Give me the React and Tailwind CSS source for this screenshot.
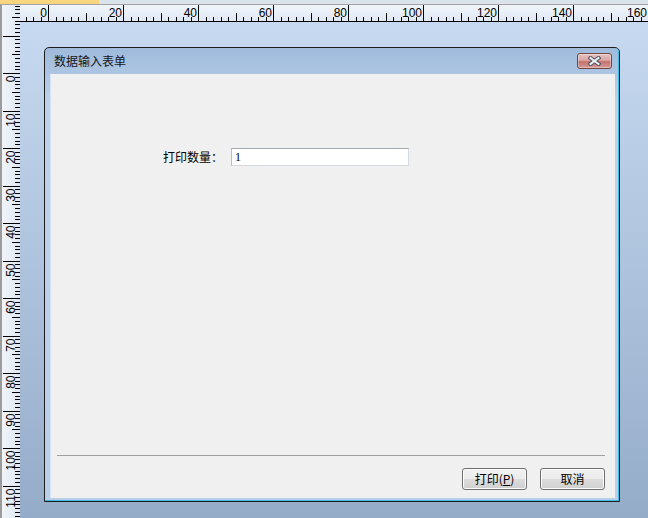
import React from 'react';

const cjk = "font-['Noto_Sans_CJK_SC','Noto_Sans_CJK_JP',sans-serif]";

// top ruler: 0 sits at page x 48.5, one small tick every 2 units (7.5px)
function TopRuler() {
  const ticks = [];
  for (let k = -3; k <= 80; k++) {
    const x = Math.floor(28.5 + 7.5 * k) + 0.5;
    const major = k % 10 === 0;
    const mid = !major && k % 5 === 0;
    const y1 = major ? 0 : mid ? 8 : 12;
    ticks.push(<line key={k} x1={x} x2={x} y1={y1} y2={16} stroke="#000" strokeWidth="1" />);
    if (major && k >= 0) {
      ticks.push(
        <text key={'t' + k} x={x - 1.5} y={12} textAnchor="end" fontSize="12"
          fontFamily="'Liberation Sans Narrow','Liberation Sans',sans-serif" fill="#000">
          {2 * k}
        </text>
      );
    }
  }
  return (
    <svg width="628" height="16" className="block">
      {ticks}
    </svg>
  );
}

// side ruler: 0 sits at page y 73.5, one tick every unit (3.75px)
function SideRuler() {
  const ticks = [];
  for (let j = -18; j <= 118; j++) {
    const y = Math.floor(68.5 + 3.75 * j) + 0.5;
    const major = j % 10 === 0;
    const mid = !major && j % 5 === 0;
    const x1 = major ? 1 : mid ? 10 : 13;
    ticks.push(<line key={j} x1={x1} x2={18} y1={y} y2={y} stroke="#000" strokeWidth="1" />);
    if (major && j >= 0) {
      ticks.push(
        <text key={'t' + j} x={13} y={y + 2} textAnchor="end" fontSize="12"
          transform={`rotate(-90 13 ${y + 2})`}
          fontFamily="'Liberation Sans Narrow','Liberation Sans',sans-serif" fill="#000">
          {j}
        </text>
      );
    }
  }
  return (
    <svg width="18" height="513" className="block">
      {ticks}
    </svg>
  );
}

function CloseButton() {
  return (
    <div className="w-[35px] h-[16px] mt-[5px] mr-[6px] rounded-[3px] border border-[#6e4646] bg-[linear-gradient(#e6c2c0_0%,#d9a5a2_45%,#c4726d_55%,#d49a96_100%)] shadow-[inset_0_0_0_1px_rgba(255,255,255,0.35)] flex items-center justify-center">
      <svg width="13" height="10" viewBox="0 0 13 10">
        <path d="M2.5 2 L10.5 8 M10.5 2 L2.5 8" stroke="#4b4f5e" strokeWidth="4" strokeLinecap="square" />
        <path d="M2.5 2 L10.5 8 M10.5 2 L2.5 8" stroke="#eef2f6" strokeWidth="2" strokeLinecap="square" />
      </svg>
    </div>
  );
}

function Button({ children }) {
  return (
    <button className={`w-[65px] h-[22px] rounded-[3px] border border-[#707070] bg-[linear-gradient(#f2f2f2_0%,#ebebeb_50%,#dddddd_50%,#cfcfcf_100%)] shadow-[inset_0_0_0_1px_#fbfbfb] text-[12px] leading-none text-black ${cjk}`}>
      {children}
    </button>
  );
}

export default function App() {
  return (
    <div className="w-[648px] h-[518px] overflow-hidden flex flex-col bg-[#e4ecf6]">
      {/* top strip */}
      <div className="h-[4px] flex">
        <div className="w-[99px] bg-[#f8d57e]" />
        <div className="flex-1 bg-[#dbe3ec]" />
      </div>
      <div className="h-px bg-[#a3a3a3]" />

      <div className="flex-1 flex">
        <div className="w-[20px] border-l-2 border-[#9b9b9b] bg-[linear-gradient(90deg,#f1f5fa,#dfe8f3)]">
          <SideRuler />
        </div>

        <div className="flex-1 flex flex-col">
          <div className="h-[16px] bg-[linear-gradient(#f1f5fb,#dfe8f4)]">
            <TopRuler />
          </div>
          <div className="h-px bg-black" />

          {/* design canvas */}
          <div className="flex-1 pl-[24px] pt-[25px] bg-[linear-gradient(#c6d9f0,#95acc9)]">
            <div className="w-[576px] h-[455px] rounded-t-[5px] border border-[#1c1c1c] bg-[linear-gradient(#9fbadb,#bcd2eb_12%,#b9cfe9)]">
              <div className="h-full flex flex-col border-r border-b border-[#3bbde6] rounded-t-[4px]">
                {/* title bar */}
                <div className="h-[26px] flex items-start">
                  <div className={`flex-1 pl-[9px] pt-[6px] text-[12px] leading-[14px] text-[#151515] ${cjk}`}>
                    数据输入表单
                  </div>
                  <CloseButton />
                </div>

                {/* client area */}
                <div className="h-[424px] ml-[5px] mr-[3px] bg-[#f0f0f0] border-l border-[#d6e3f1] flex flex-col">
                  <div className="pt-[74px] pl-[112px] flex items-center">
                    <span className={`w-[68px] text-[12px] leading-none text-black ${cjk}`}>打印数量：</span>
                    <div className="w-[178px] h-[18px] bg-white border border-[#d5d9e0] border-t-[#a3a7b0] border-l-[#b8bcc4] flex items-center pl-[3px] text-[12px] leading-none text-black font-['Liberation_Serif',serif]">
                      1
                    </div>
                  </div>

                  <div className="flex-1" />
                  <div className="h-px ml-[6px] mr-[10px] bg-[#a0a0a0]" />
                  <div className="mt-[12px] mb-[8px] mr-[10px] flex justify-end gap-[13px]">
                    <Button>
                      打印(<span className="underline">P</span>)
                    </Button>
                    <Button>取消</Button>
                  </div>
                </div>
              </div>
            </div>
          </div>
        </div>
      </div>
    </div>
  );
}
